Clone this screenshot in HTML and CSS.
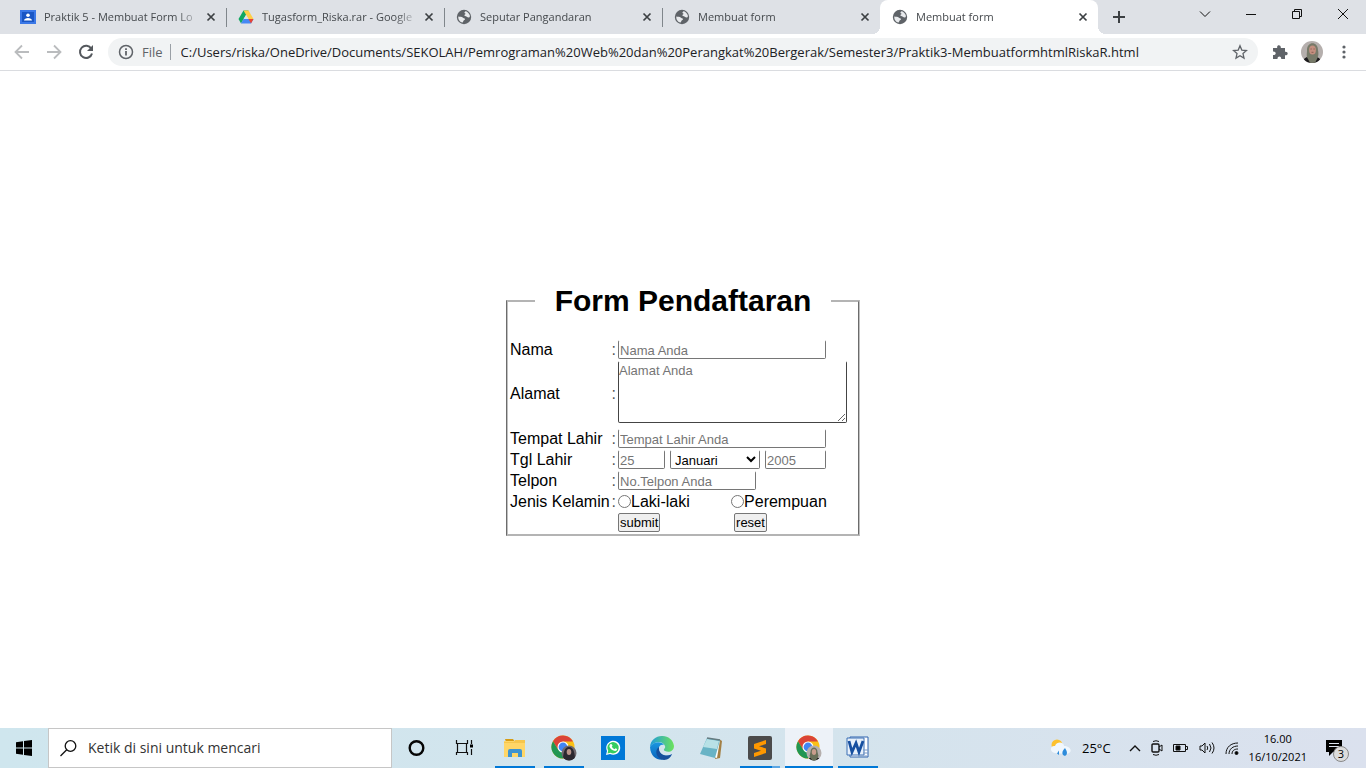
FILE: index.html
```html
<!DOCTYPE html>
<html lang="id">
<head>
<meta charset="utf-8">
<title>Membuat form</title>
<link rel="stylesheet" href="styles.css">
</head>
<body>
<svg class="defs" aria-hidden="true">
  <symbol id="globe" viewBox="0 0 16 16"><circle cx="8" cy="8" r="7.200" fill="#5f6368"/><path d="M9.300 2.200C11 2.300 13 4 13.700 6c.3 1.300.2 2-.3 2.300-.9.5-2-.1-2.600-.5-.4-.6-1.500-.4-2.200-1-.5-.6 0-1.300.7-1.600.6-.4-.1-1.200-.9-1.300.1-.8.6-1.100.9-1.700zM2.300 7.500c1.500.3 3.600.1 4.400 1.100.6.8 2 .6 2.300 1.500.2.9-1.100 1-1.500 1.600-.4.6-.4 1.300-1 1.800C4 13.300 2 10.700 2.300 7.500z" fill="#e8eaed"/></symbol>
  <symbol id="close" viewBox="0 0 10 10"><path d="M1.500 1.500l7 7m0-7l-7 7" stroke="#3c4043" stroke-width="1.700"/></symbol>
  <symbol id="chrome" viewBox="0 0 26 26"><circle cx="12" cy="12" r="11.500" fill="#fbc116"/><path d="M2 6.200A11.500 11.500 0 0 1 22 6.500H12L7.200 14.800z" fill="#db4437"/><path d="M2 6.200A11.500 11.500 0 0 0 12 23.500l4.800-8.700H7.200z" fill="#219653"/><circle cx="12" cy="12" r="5.500" fill="#fff"/><circle cx="12" cy="12" r="4.400" fill="#4285f4"/></symbol>
</svg>

<header class="browser">
  <div class="tabs">
    <div class="tab"><svg class="fav" viewBox="0 0 16 16"><path d="M0 1h16v14H0z" fill="#3b78e7"/><path d="M2 3h12v10H2z" fill="#1a56c4"/><circle cx="8" cy="6.200" r="1.800" fill="#fff"/><path d="M4 11.500c0-3.500 8-3.500 8 0z" fill="#fff"/></svg><span class="title">Praktik 5 - Membuat Form Lo</span><button class="x" aria-label="Tutup"><svg><use href="#close"/></svg></button></div>
    <div class="tab"><svg class="fav" viewBox="0 0 16 16"><path d="M5.500 1.500h5L8 6 3 14.500.5 10z" fill="#11a861"/><path d="M5.500 1.500h5L15.500 10h-5z" fill="#ffcf48"/><path d="M5.500 10h10L13 14.500H3z" fill="#4688f4"/><path d="M10.500 10h5L13 14.500z" fill="#ea4335"/><path d="M8 6l2.400 4H5.600z" fill="#dee1e6"/></svg><span class="title">Tugasform_Riska.rar - Google</span><button class="x" aria-label="Tutup"><svg><use href="#close"/></svg></button></div>
    <div class="tab"><svg class="fav"><use href="#globe"/></svg><span class="title">Seputar Pangandaran</span><button class="x" aria-label="Tutup"><svg><use href="#close"/></svg></button></div>
    <div class="tab last"><svg class="fav"><use href="#globe"/></svg><span class="title">Membuat form</span><button class="x" aria-label="Tutup"><svg><use href="#close"/></svg></button></div>
    <div class="tab active"><svg class="fav"><use href="#globe"/></svg><span class="title">Membuat form</span><button class="x" aria-label="Tutup"><svg><use href="#close"/></svg></button></div>
    <button class="new" aria-label="Tab baru"><svg width="12" height="12" viewBox="0 0 12 12"><path d="M6 0v12M0 6h12" stroke="#3c4043" stroke-width="2"/></svg></button>
    <div class="window">
      <button aria-label="Cari tab"><svg viewBox="0 0 12 12"><path d="M1 3.500l5 5 5-5"/></svg></button>
      <button aria-label="Kecilkan"><svg viewBox="0 0 12 12"><path d="M1 6.500h10"/></svg></button>
      <button aria-label="Pulihkan"><svg viewBox="0 0 12 12"><path d="M1.500 3.500h7v7h-7zM3.500 3.500v-2h7v7h-2"/></svg></button>
      <button aria-label="Tutup jendela"><svg viewBox="0 0 12 12"><path d="M1 1l10 10M11 1L1 11"/></svg></button>
    </div>
  </div>
  <div class="toolbar">
    <div class="nav">
      <button aria-label="Kembali"><svg viewBox="0 0 16 16"><path d="M15 8H2M8 1.500L1.500 8 8 14.500" fill="none" stroke="#babcbe" stroke-width="1.800"/></svg></button>
      <button aria-label="Maju"><svg viewBox="0 0 16 16"><path d="M1 8h13M8 1.500L14.500 8 8 14.500" fill="none" stroke="#babcbe" stroke-width="1.800"/></svg></button>
      <button aria-label="Muat ulang"><svg viewBox="0 0 16 16"><path d="M13.300 4.700A6.100 6.100 0 1 0 14 9.500" fill="none" stroke="#54585d" stroke-width="2"/><path d="M15 1v6H9z" fill="#54585d"/></svg></button>
    </div>
    <div class="omnibox">
      <svg class="info" viewBox="0 0 16 16"><circle cx="8" cy="8" r="6.500" fill="none" stroke="#5f6368" stroke-width="1.500"/><path d="M8 7v4.500M8 4.300v1.600" stroke="#5f6368" stroke-width="1.800"/></svg>
      <span class="scheme">File</span>
      <input class="url" aria-label="Alamat situs" value="C:/Users/riska/OneDrive/Documents/SEKOLAH/Pemrograman%20Web%20dan%20Perangkat%20Bergerak/Semester3/Praktik3-MembuatformhtmlRiskaR.html">
      <button aria-label="Tandai"><svg viewBox="0 0 16 16"><path d="M8 1.800l1.800 4.300 4.700.4-3.500 3.100 1 4.500-4-2.400-4 2.400 1-4.500-3.500-3.100 4.700-.4z" fill="none" stroke="#5f6368" stroke-width="1.300"/></svg></button>
    </div>
    <button class="ext" aria-label="Ekstensi"><svg viewBox="0 0 16 16"><path d="M1 4h4.200c-.8-3.600 4.100-3.600 3.600 0H13v3.700c3.600-.6 3.600 4.200 0 3.600V15H9.200c.4-3.500-4-3.500-3.700 0H1v-4c3.600.4 3.600-3.900 0-3.600z" fill="#5f6368"/></svg></button>
    <button class="profile" aria-label="Profil"><svg viewBox="0 0 22 22"><clipPath id="pc"><circle cx="11" cy="11" r="11"/></clipPath><g clip-path="url(#pc)"><path d="M0 0h22v22H0z" fill="#b5afad"/><path d="M2 22c0-5 4-7 9-7s9 2 9 7z" fill="#1c1b1d"/><path d="M6 9c0-9 11-9 11 0 1 5 0 7-1 9l-2 4H9l-2-4C5 15 6 13 6 9z" fill="#777a69"/><ellipse cx="11.500" cy="9" rx="3.400" ry="4.500" fill="#c48f7f"/><path d="M9.500 8h1.200M12.500 8h1.200M10.500 11.300h2" stroke="#70473f" stroke-width=".7"/></g></svg></button>
    <button class="more" aria-label="Menu"><svg viewBox="0 0 16 16"><g fill="#5f6368"><circle cx="8" cy="3" r="1.600"/><circle cx="8" cy="8" r="1.600"/><circle cx="8" cy="13" r="1.600"/></g></svg></button>
  </div>
</header>

<main class="page">
  <form>
    <fieldset class="card">
      <legend><h1>Form Pendaftaran</h1></legend>
      <table>
        <tr><td><label for="nama">Nama</label></td><td class="colon">:</td><td colspan="2"><input class="field wide" id="nama" placeholder="Nama Anda"></td></tr>
        <tr class="tall"><td><label for="alamat">Alamat</label></td><td class="colon">:</td><td colspan="2"><textarea class="field" id="alamat" placeholder="Alamat Anda"></textarea></td></tr>
        <tr><td><label for="tempat">Tempat Lahir</label></td><td class="colon">:</td><td colspan="2"><input class="field wide" id="tempat" placeholder="Tempat Lahir Anda"></td></tr>
        <tr><td><label for="tgl">Tgl Lahir</label></td><td class="colon">:</td><td colspan="2"><div class="date"><input class="field day" id="tgl" placeholder="25"><select class="field" aria-label="Bulan"><option>Januari</option><option>Februari</option><option>Maret</option></select><input class="field year" aria-label="Tahun" placeholder="2005"></div></td></tr>
        <tr><td><label for="telpon">Telpon</label></td><td class="colon">:</td><td colspan="2"><input class="field phone" id="telpon" placeholder="No.Telpon Anda"></td></tr>
        <tr><td>Jenis Kelamin</td><td class="colon">:</td><td class="first"><div class="radio"><input type="radio" name="jk" id="l"><label for="l">Laki-laki</label></div></td><td><div class="radio"><input type="radio" name="jk" id="p"><label for="p">Perempuan</label></div></td></tr>
        <tr><td></td><td></td><td><button class="btn" type="button">submit</button></td><td class="second"><button class="btn" type="reset">reset</button></td></tr>
      </table>
    </fieldset>
  </form>
</main>

<footer class="taskbar">
  <button class="start" aria-label="Mulai"><svg width="16" height="16" viewBox="0 0 16 16"><path d="M0 2.300l7-1v6.300H0zM8 1.100L16 0v7.600H8zM0 8.500h7v6.300l-7-1zM8 8.500h8V16l-8-1.100z"/></svg></button>
  <label class="search"><svg width="18" height="18" viewBox="0 0 18 18"><circle cx="10.500" cy="7" r="5.300" fill="none" stroke="#111" stroke-width="1.300"/><path d="M6.700 10.800L.5 17" stroke="#111" stroke-width="1.300"/></svg><input placeholder="Ketik di sini untuk mencari" aria-label="Cari"></label>
  <div class="apps">
    <button class="app" aria-label="Cortana"><svg viewBox="0 0 24 24"><circle cx="11.500" cy="12" r="6.800" fill="none" stroke="#050505" stroke-width="2.400"/></svg></button>
    <button class="app" aria-label="Tampilan tugas"><svg viewBox="0 0 24 24"><path d="M2.500 4v3.500h11V4M2.500 19v-2.500h11V19M3.500 7.500v9M12.500 7.500v9M17.500 4v4M17.500 13v6" fill="none" stroke="#111" stroke-width="1.200"/><path d="M16 8.500h3v3h-3z"/></svg></button>
    <button class="app open" aria-label="Penjelajah File"><svg viewBox="0 0 24 24"><path d="M2 3h8l2 3h-9z" fill="#d69c15"/><path d="M1 5h21v16H1z" fill="#ffd667"/><path d="M1 6h10l1-2h10v3H1z" fill="#f6c64d"/><path d="M5 21v-6q0-2 2-2h10q2 0 2 2v6h-4v-4H9v4z" fill="#3e94d1"/></svg></button>
    <button class="app open" aria-label="Chrome"><svg class="duo" viewBox="0 0 26 26"><use href="#chrome" width="26" height="26"/><clipPath id="a1"><circle cx="18" cy="18" r="7.500"/></clipPath><g clip-path="url(#a1)"><path d="M10 10h16v16H10z" fill="#70696e"/><path d="M12 26c0-7 1-14 6-14s6 7 6 14z" fill="#2b2830"/><ellipse cx="18" cy="17" rx="2.300" ry="3" fill="#ba9489"/></g></svg></button>
    <button class="app" aria-label="WhatsApp"><svg viewBox="0 0 24 24"><path d="M0 0h24v24H0z" fill="#0078d7"/><path d="M5 19l1-4a7 7 0 1 1 3 3z" fill="#fff"/><path d="M6.500 17.500l.7-2.700a5.700 5.700 0 1 1 2.200 2z" fill="#35cd61"/><path d="M9.500 8l1.300.2.700 1.600-.7 1q1 2 2.700 2.400l1-.9 1.600.8q0 2-2 2-5-1-5.800-5z" fill="#fff"/></svg></button>
    <button class="app" aria-label="Edge"><svg viewBox="0 0 24 24"><defs><linearGradient id="e1"><stop stop-color="#209bdc"/><stop offset="1" stop-color="#6ce35b"/></linearGradient><linearGradient id="e2" x2="0" y2="1"><stop stop-color="#1a97e1"/><stop offset="1" stop-color="#0a63bb"/></linearGradient></defs><path d="M0 11C1-3 22-4 24 10c0 5-5 7-9 5-3-2 1-2 0-5C13 5 5 4 0 11z" fill="url(#e1)"/><path d="M0 11c3-6 12-6 14-2-4-1-6 2-5 6 2 5 9 6 13 3-5 8-21 9-22-7z" fill="url(#e2)"/><path d="M9 11c-5 3-3 12 5 13 4 0 7-3 8-6-4 3-14 2-13-7z" fill="#154f9c"/></svg></button>
    <button class="app" aria-label="Notepad"><svg viewBox="0 0 24 24"><path d="M20 3l3 2-2 17-5 1z" fill="#a38045"/><path d="M20 3l1 1-3 18-3-1z" fill="#fff"/><path d="M8 2l13 2-5 18L1 18z" fill="#69b3c5"/><path d="M8 3l12 2-2 8L4 11z" fill="#b8e1e6"/><path d="M8 2l13 2" stroke="#667b80" stroke-width="1.500"/></svg></button>
    <button class="app open multi" aria-label="Sublime Text"><svg viewBox="0 0 24 24"><rect width="24" height="24" rx="2" fill="#4b4b4b"/><path d="M6 8l12-4v4l-7 2.300 7 2.200V17L6 21v-4l7-2.300-7-2.200z" fill="#ff9800"/></svg></button>
    <button class="app current" aria-label="Chrome aktif"><svg class="duo" viewBox="0 0 26 26"><use href="#chrome" width="26" height="26"/><clipPath id="a2"><circle cx="18" cy="18" r="7.500"/></clipPath><g clip-path="url(#a2)"><path d="M10 10h16v16H10z" fill="#b5afad"/><path d="M12 26c0-3 2-4 6-4s6 1 6 4z" fill="#242323"/><path d="M14.500 17c0-6 7-6 7 0l1 4-3 5h-3l-3-5z" fill="#697059"/><ellipse cx="18" cy="17" rx="2.200" ry="2.900" fill="#c99d8c"/></g></svg></button>
    <button class="app open" aria-label="Word"><svg viewBox="0 0 24 24"><path d="M4 1h18v20H4z" fill="#fff" stroke="#2e62ae"/><path d="M1 2h17v17H1z" fill="#e7f0fb" stroke="#3c70b5"/><path d="M3 5l3 11 4-9 3 9 4-11" fill="none" stroke="#164fa0" stroke-width="2.800"/><path d="M17 17h5M17 14h5M12 20h9" stroke="#7597c4"/></svg></button>
  </div>
  <div class="tray">
    <svg width="22" height="18" viewBox="0 0 22 18"><circle cx="7" cy="6" r="5.500" fill="#fdc12d"/><path d="M5 14C-1 13 0 6 5 7c2-5 9-4 9 0 8 0 9 8 2 8z" fill="#f0f7fd"/><path d="M7 14.500l2-3v4.500zM13 16q-2-3 2-7 4 6 0 8z" fill="#2d8cdb"/></svg>
    <span class="temp">25°C</span>
    <svg width="12" height="8" viewBox="0 0 12 8"><path d="M1 7l5-5 5 5" stroke-width="1.400"/></svg>
    <svg width="12" height="16" viewBox="0 0 12 16"><rect x="1" y="4" width="7" height="8" rx="1" stroke-width="1.400"/><path d="M8 7l3-2v6L8 9M2 1.500q3-1.500 6 0M2 14.500q3 1.500 6 0"/></svg>
    <svg width="16" height="10" viewBox="0 0 16 10"><path d="M.5 1.500h12v7H.5zM12.500 3.500h2v3h-2"/><path d="M3 3h4v4H3z" fill="#000"/></svg>
    <svg width="16" height="14" viewBox="0 0 16 14"><path d="M1 5h2l3-3v10L3 9H1zM8 5q1.500 2 0 4M10.500 3q3 4 0 8M13 1.500q4 5.500 0 11"/></svg>
    <svg width="14" height="14" viewBox="0 0 14 14"><path d="M1 13C1 6 6 2 13 2M4 13c0-5 4-8 9-8M7 13c0-3 2-5 6-5"/><circle cx="11.500" cy="12" r="1.500" fill="#000"/></svg>
    <time class="clock"><span>16.00</span><span>16/10/2021</span></time>
    <button class="note" aria-label="3 pemberitahuan"><svg width="18" height="18" viewBox="0 0 18 18"><path d="M1 1h16v12H8l-4 4v-4H1z" fill="#000"/><path d="M4 4.500h10M4 7.500h10" stroke="#dce4ef"/></svg><span class="badge">3</span></button>
  </div>
</footer>
</body>
</html>
```
FILE: styles.css
```css
* { box-sizing: border-box; margin: 0; padding: 0; }
body { min-height: 100vh; display: flex; flex-direction: column; background: #fff; color: #000; font: 12px/16px "Open Sans", "Noto Sans", sans-serif; }
button { border: 0; background: none; font: inherit; color: inherit; }
svg { display: block; flex: none; }
.defs { position: absolute; width: 0; height: 0; }

.tabs { display: flex; height: 34px; padding-left: 8px; background: #dee1e6; }
.tab { display: flex; align-items: center; flex: 0 1 218px; min-width: 0; padding: 0 7px 0 12px; position: relative; color: #45494d; font-size: 11px; }
.tab::after { content: ""; position: absolute; right: -1px; top: 8px; width: 1px; height: 19px; background: #80868b; }
.tab.last::after { display: none; }
.tab.active { background: #fff; border-radius: 8px 8px 0 0; }
.tab.active::before { content: ""; position: absolute; bottom: 0; left: -8px; width: 8px; height: 8px; background: radial-gradient(circle at 0 0, #dee1e6 8px, #fff 8px); }
.tab.active::after { top: auto; bottom: 0; right: -8px; width: 8px; height: 8px; background: radial-gradient(circle at 100% 0, #dee1e6 8px, #fff 8px); }
.fav { width: 16px; height: 16px; }
.title { flex: 1; min-width: 0; margin: 0 2px 0 8px; overflow: hidden; white-space: nowrap; -webkit-mask-image: linear-gradient(to right, #000 calc(100% - 24px), transparent); mask-image: linear-gradient(to right, #000 calc(100% - 24px), transparent); }
.x { padding: 3px; }
.x svg { width: 10px; height: 10px; }
.new { padding: 0 15px; }
.window { display: flex; margin-left: auto; height: 28px; }
.window button { width: 46px; display: grid; place-items: center; }
.window svg { width: 12px; height: 12px; fill: none; stroke: #111; }

.toolbar { display: flex; align-items: center; height: 37px; padding: 0 14px; border-bottom: 1px solid #dadce0; }
.nav { display: flex; gap: 16px; margin-right: 14px; }
.toolbar svg { width: 16px; height: 16px; }
.omnibox { flex: 1; display: flex; align-items: center; height: 28px; padding: 0 10px; border-radius: 14px; background: #f1f3f4; font-size: 13px; }
.scheme { margin: 0 10px 0 8px; padding-right: 7px; border-right: 1px solid #9aa0a6; color: #5f6368; }
.url { flex: 1; min-width: 0; border: 0; background: none; outline: 0; font: inherit; color: #202124; }
.ext { margin-left: 14px; }
.profile { margin: 0 13px; }
.toolbar .profile svg { width: 22px; height: 22px; }

.page { flex: 1; display: grid; place-items: center; padding-bottom: 1px; font: 16px/18px "Liberation Sans", Arial, sans-serif; }
.page form { margin-top: 22px; }
.card { min-width: 354px; border-width: 2px; border-style: solid groove; border-color: #b4b4b4 #c0c0c0; }
legend { margin: 0 auto; padding: 0 20px; }
h1 { font-size: 30px; line-height: 34px; }
table { margin-top: 20px; border-spacing: 2px; }
td { height: 19px; vertical-align: middle; white-space: nowrap; }
.colon { color: #555; }
.tall td { height: 66px; }
.field { display: block; height: 19px; border: 1px solid #767676; border-top-color: transparent; border-radius: 2px; background: #fff; font: 13px/15px "Liberation Sans", Arial, sans-serif; padding: 2px 1px 0; }
.field::placeholder { color: #757575; }
.wide { width: 208px; }
textarea.field { width: 229px; height: 62px; margin-bottom: 4px; padding: 1px 0 0; border-color: transparent #444 #444; }
.date { display: flex; gap: 5px; }
.day { width: 47px; }
select.field { width: 90px; padding: 1px 0 0; }
.year { width: 61px; }
.phone { width: 138px; }
.first { width: 111px; }
.radio { display: flex; align-items: center; }
.radio input { width: 13px; height: 13px; }
.btn { display: block; height: 19px; padding: 0 1px; border: 1px solid #767676; border-radius: 2px; background: #efefef; font-size: 13px; line-height: 17px; }
td.second { padding-left: 3px; }

.taskbar { display: flex; height: 40px; background: linear-gradient(to right, #cfe6ee, #d4e4ed 60%, #dbe1ee); }
.start { width: 48px; display: grid; place-items: center; }
.search { flex: 0 1 344px; display: flex; align-items: center; gap: 10px; padding: 0 11px; border: 1px solid #c6c6c6; background: #fff; }
.search input { flex: 1; min-width: 0; border: 0; outline: 0; background: none; font: 14px/20px "Open Sans", sans-serif; }
.search input::placeholder { color: #333; opacity: 1; }
.apps { display: flex; gap: 1px; margin-left: 1px; }
.app { width: 48px; display: grid; place-items: center; position: relative; }
.app svg { width: 24px; height: 24px; }
.app .duo { width: 26px; height: 26px; }
.open::after, .current::after { content: ""; position: absolute; left: 4px; right: 4px; bottom: 0; height: 2px; background: #0078d7; }
.multi::after { background: linear-gradient(to right, #0078d7 80%, #5ba6e3 80%); }
.current { background: #edf2f8; }
.current::after { left: 0; right: 0; }
.tray { display: flex; align-items: center; gap: 10px; margin-left: auto; padding-right: 15px; }
.tray svg { fill: none; stroke: #111; }
.tray svg:first-child { stroke: none; }
.temp { margin-right: 8px; font-size: 13px; }
.clock { display: grid; text-align: center; font-size: 11px; line-height: 18px; }
.note { position: relative; margin: 0 8px; }
.badge { position: absolute; left: 8px; top: 7px; width: 16px; height: 16px; border: 1px solid #888; border-radius: 50%; background: #dcdcdc; font-size: 11px; line-height: 14px; }
```
